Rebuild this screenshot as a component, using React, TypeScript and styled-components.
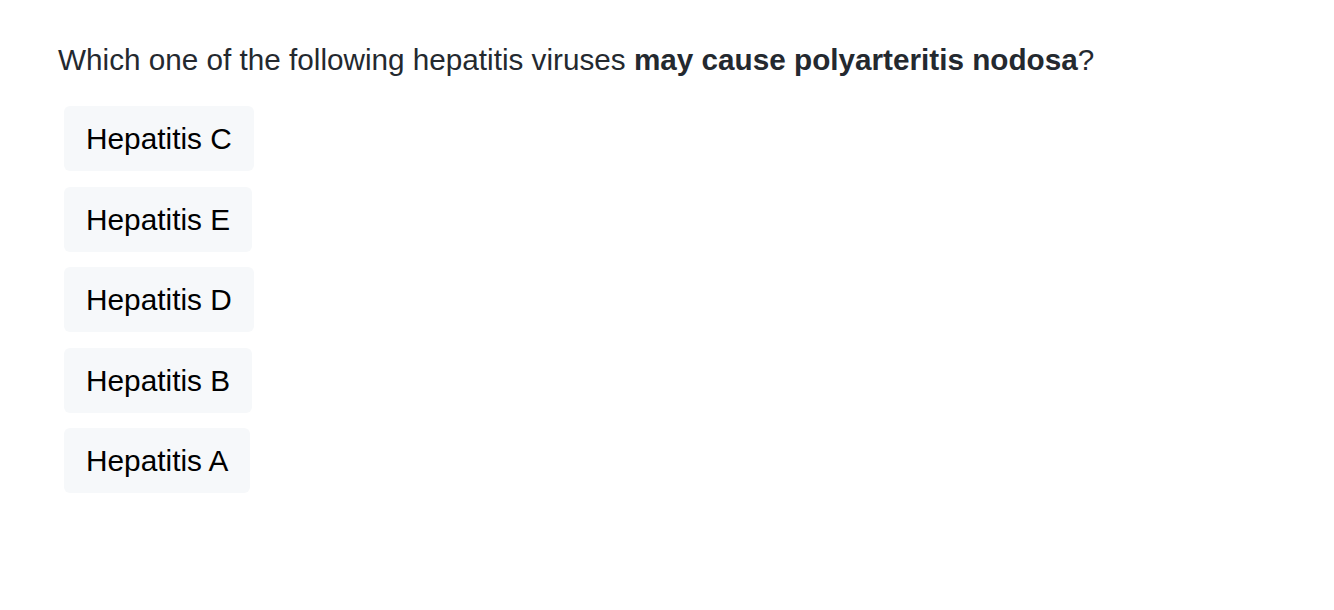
import * as React from 'react';
import styled, { createGlobalStyle } from 'styled-components';

const GlobalStyle = createGlobalStyle`
  html, body {
    margin: 0;
    padding: 0;
    background: #ffffff;
  }
  body {
    font-family: "Liberation Sans", Arial, sans-serif;
  }
`;

const QuizBlock = styled.div`
  padding: 40px 58px;
  display: flex;
  flex-direction: column;
  align-items: flex-start;
`;

const Question = styled.p`
  margin: 0 0 26px 0;
  font-size: 29.7px;
  line-height: 40px;
  color: #24292f;
  white-space: nowrap;
  b {
    font-weight: 700;
  }
`;

const OptionList = styled.div`
  display: flex;
  flex-direction: column;
  align-items: flex-start;
  gap: 15.5px;
  padding-left: 6px;
`;

const Option = styled.button`
  border: none;
  background: #f6f8fa;
  border-radius: 6px;
  padding: 16px 22px;
  font-family: "Liberation Sans", Arial, sans-serif;
  font-size: 29.8px;
  line-height: 33px;
  color: #000000;
  text-align: left;
  cursor: pointer;
`;

const options = ['Hepatitis C', 'Hepatitis E', 'Hepatitis D', 'Hepatitis B', 'Hepatitis A'];

export default function App() {
  return (
    <>
      <GlobalStyle />
      <QuizBlock>
        <Question>
          Which one of the following hepatitis viruses <b>may cause polyarteritis nodosa</b>?
        </Question>
        <OptionList>
          {options.map((o) => (
            <Option key={o}>{o}</Option>
          ))}
        </OptionList>
      </QuizBlock>
    </>
  );
}
